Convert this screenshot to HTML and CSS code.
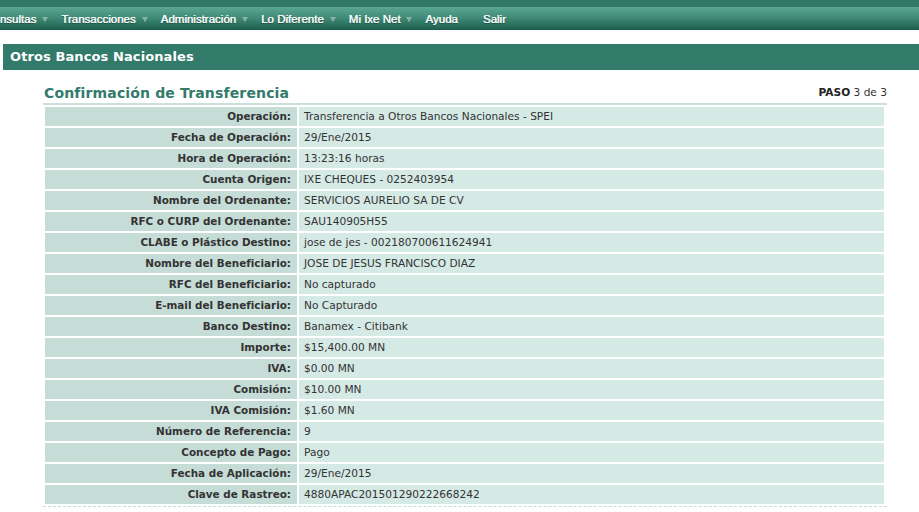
FILE: index.html
```html
<!DOCTYPE html>
<html lang="es">
<head>
<meta charset="utf-8">
<title>Confirmación de Transferencia</title>
<link rel="stylesheet" href="styles.css">
</head>
<body>
<div class="topstrip"></div>
<nav class="menubar">
  <ul class="menu">
    <li class="item first">Consultas<span class="arrow"></span></li>
    <li class="item">Transacciones<span class="arrow"></span></li>
    <li class="item">Administración<span class="arrow"></span></li>
    <li class="item">Lo Diferente<span class="arrow"></span></li>
    <li class="item">Mi Ixe Net<span class="arrow"></span></li>
    <li class="item">Ayuda</li>
    <li class="item salir">Salir</li>
  </ul>
</nav>
<div class="section">Otros Bancos Nacionales</div>
<main class="content">
  <div class="titlebar">
    <h1 class="title">Confirmación de Transferencia</h1>
    <div class="paso"><b>PASO</b> 3 de 3</div>
  </div>
  <table class="data">
    <tr><th>Operación:</th><td>Transferencia a Otros Bancos Nacionales - SPEI</td></tr>
    <tr><th>Fecha de Operación:</th><td>29/Ene/2015</td></tr>
    <tr><th>Hora de Operación:</th><td>13:23:16 horas</td></tr>
    <tr><th>Cuenta Origen:</th><td>IXE CHEQUES - 0252403954</td></tr>
    <tr><th>Nombre del Ordenante:</th><td>SERVICIOS AURELIO SA DE CV</td></tr>
    <tr><th>RFC o CURP del Ordenante:</th><td>SAU140905H55</td></tr>
    <tr><th>CLABE o Plástico Destino:</th><td>jose de jes - 002180700611624941</td></tr>
    <tr><th>Nombre del Beneficiario:</th><td>JOSE DE JESUS FRANCISCO DIAZ</td></tr>
    <tr><th>RFC del Beneficiario:</th><td>No capturado</td></tr>
    <tr><th>E-mail del Beneficiario:</th><td>No Capturado</td></tr>
    <tr><th>Banco Destino:</th><td>Banamex - Citibank</td></tr>
    <tr><th>Importe:</th><td>$15,400.00 MN</td></tr>
    <tr><th>IVA:</th><td>$0.00 MN</td></tr>
    <tr><th>Comisión:</th><td>$10.00 MN</td></tr>
    <tr><th>IVA Comisión:</th><td>$1.60 MN</td></tr>
    <tr><th>Número de Referencia:</th><td>9</td></tr>
    <tr><th>Concepto de Pago:</th><td>Pago</td></tr>
    <tr><th>Fecha de Aplicación:</th><td>29/Ene/2015</td></tr>
    <tr><th>Clave de Rastreo:</th><td>4880APAC201501290222668242</td></tr>
  </table>
  <div class="dashline"></div>
</main>
</body>
</html>
```

FILE: styles.css
```css
html, body {
  margin: 0;
  padding: 0;
  background: #ffffff;
  overflow: hidden;
}
body {
  font-family: "DejaVu Sans", Verdana, sans-serif;
  font-size: 11px;
  color: #333333;
}
.topstrip {
  height: 7px;
  background: #317867;
}
.menubar {
  height: 23px;
  background: linear-gradient(to bottom, #5ba693 0%, #418c78 45%, #2a6f5c 80%, #1e5b4a 100%);
  overflow: hidden;
}
.menu {
  list-style: none;
  margin: 0 0 0 -15px;
  padding: 0;
  display: flex;
  align-items: center;
  height: 23px;
  white-space: nowrap;
}
.item {
  font-family: "Liberation Sans", Arial, sans-serif;
  font-weight: normal;
  font-size: 11.5px;
  color: #f4f8f6;
  text-shadow: 0.5px 0 0 #f4f8f6, 0 1px 1px rgba(0,0,0,0.4);
  display: flex;
  align-items: center;
}
.arrow {
  width: 0;
  height: 0;
  border-left: 3px solid transparent;
  border-right: 3px solid transparent;
  border-top: 5px solid #88b4a8;
  margin: 1px 13px 0 6px;
}
.salir {
  margin-left: 25px;
}
.section {
  margin: 14px 0 0 3px;
  height: 26px;
  line-height: 26px;
  background: #327a6a;
  color: #ffffff;
  font-weight: bold;
  font-size: 13px;
  letter-spacing: 0.1px;
  padding-left: 7px;
}
.content {
  margin: 14px 0 0 43px;
  width: 844px;
}
.titlebar {
  display: flex;
  justify-content: space-between;
  align-items: flex-end;
  border-bottom: 2px solid #c9e0db;
  padding-bottom: 1px;
}
.title {
  margin: 0 0 0 1px;
  font-size: 14px;
  letter-spacing: 0.15px;
  font-weight: bold;
  color: #327a6a;
  line-height: 18px;
}
.paso {
  font-size: 10.6px;
  color: #333333;
  line-height: 14px;
  padding-bottom: 3px;
}
.paso b {
  color: #222222;
}
.data {
  border-collapse: separate;
  border-spacing: 2px;
  width: 843px;
}
.data th, .data td {
  height: 19px;
  padding: 0 5px;
  line-height: 19px;
}
.data th {
  width: 241px;
  text-align: right;
  background: #c5dcd7;
  color: #333333;
  font-weight: bold;
  font-size: 10.4px;
  padding-right: 6px;
}
.data td {
  text-align: left;
  background: #d5e9e5;
  color: #333333;
  font-size: 10.6px;
}
.dashline {
  border-top: 1px dashed #bfe0d8;
  width: 844px;
}
```
